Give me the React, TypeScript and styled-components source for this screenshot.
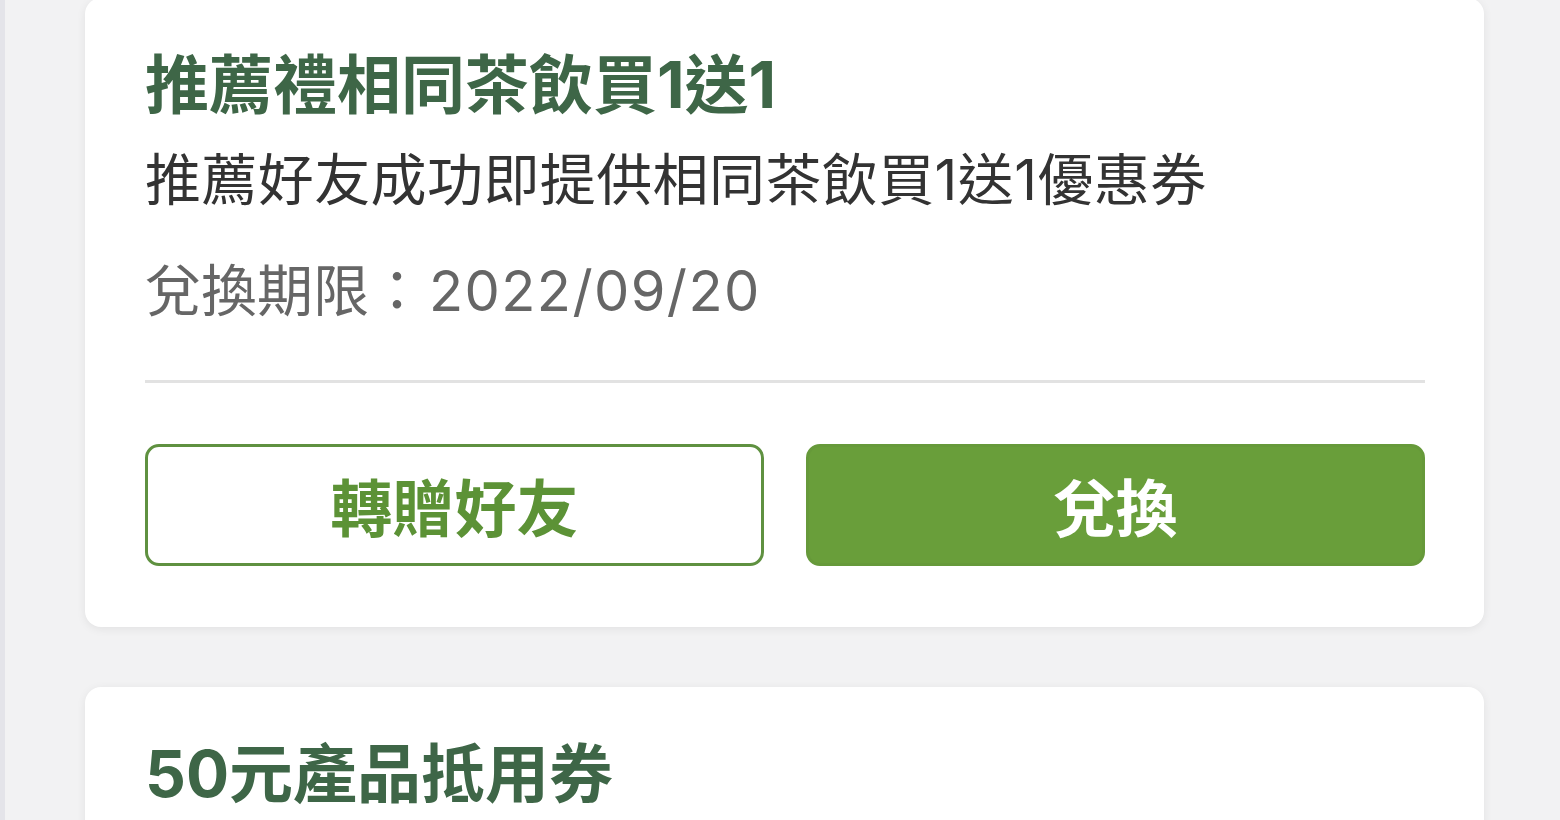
import styled, { createGlobalStyle } from 'styled-components';

const GlobalStyle = createGlobalStyle`
  html, body {
    margin: 0;
    padding: 0;
    background: #f2f2f3;
    overflow: hidden;
  }
  body {
    font-family: 'Inter', 'Noto Sans CJK TC', sans-serif;
  }
`;

const Page = styled.div`
  height: 820px;
  overflow: hidden;
  border-left: 5px solid #e4e4e9;
  padding: 0 76px 0 80px;
  box-sizing: border-box;
`;

const CouponList = styled.div`
  display: flex;
  flex-direction: column;
  gap: 60px;
  margin-top: -2px;
`;

const Card = styled.div`
  background: #ffffff;
  border-radius: 16px;
  box-shadow: 0 2px 10px rgba(0, 0, 0, 0.07);
  padding: 45px 59px 61px 60px;
`;

const Title = styled.h3`
  margin: 0;
  font-size: 64px;
  line-height: 84px;
  font-weight: 700;
  color: #3e6647;
`;

const Description = styled.p`
  margin: 17px 0 0;
  font-size: 56px;
  line-height: 73px;
  letter-spacing: 0.4px;
  color: #333333;
`;

const Expiry = styled.p`
  margin: 38px 0 0;
  font-size: 56px;
  line-height: 73px;
  color: #666666;
`;

const DateValue = styled.span`
  margin-left: 4px;
  letter-spacing: 1.4px;
`;

const Divider = styled.hr`
  margin: 52px 0 0;
  border: none;
  height: 3px;
  background: #e2e2e2;
`;

const Actions = styled.div`
  display: grid;
  grid-template-columns: 1fr 1fr;
  gap: 42px;
  margin-top: 61px;
`;

const ActionButton = styled.button<{ $primary?: boolean }>`
  height: 122px;
  border-radius: 14px;
  box-sizing: border-box;
  font-family: 'Inter', 'Noto Sans CJK TC', sans-serif;
  font-size: 62px;
  font-weight: 700;
  cursor: pointer;
  border: 3px solid ${(p) => (p.$primary ? '#66993a' : '#5f9140')};
  background: ${(p) => (p.$primary ? '#699e3a' : '#ffffff')};
  color: ${(p) => (p.$primary ? '#ffffff' : '#5c9236')};
`;

interface Coupon {
  title: string;
  description: string;
  expiry: string;
}

const coupons: Coupon[] = [
  {
    title: '推薦禮相同茶飲買1送1',
    description: '推薦好友成功即提供相同茶飲買1送1優惠券',
    expiry: '2022/09/20',
  },
  {
    title: '50元產品抵用券',
    description: '消費即可折抵50元',
    expiry: '2022/10/31',
  },
];

const CouponCard = ({ coupon }: { coupon: Coupon }) => {
  return (
    <Card>
      <Title>{coupon.title}</Title>
      <Description>{coupon.description}</Description>
      <Expiry>
        兌換期限：<DateValue>{coupon.expiry}</DateValue>
      </Expiry>
      <Divider />
      <Actions>
        <ActionButton>轉贈好友</ActionButton>
        <ActionButton $primary>兌換</ActionButton>
      </Actions>
    </Card>
  );
};

const App = () => {
  return (
    <>
      <GlobalStyle />
      <Page>
        <CouponList>
          {coupons.map((c) => (
            <CouponCard key={c.title} coupon={c} />
          ))}
        </CouponList>
      </Page>
    </>
  );
};

export default App;
